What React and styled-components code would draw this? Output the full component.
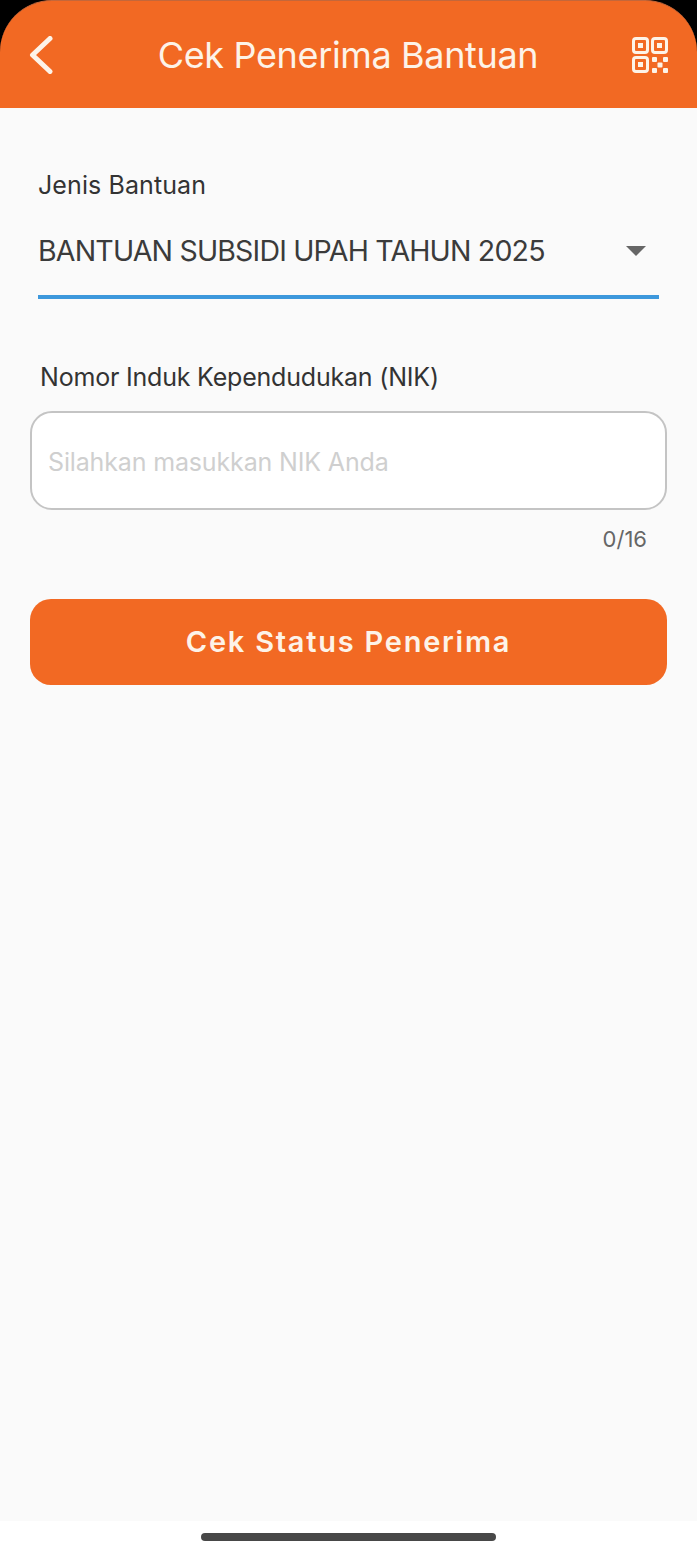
import React from 'react';
import styled, { createGlobalStyle } from 'styled-components';

const GlobalStyle = createGlobalStyle`
    html, body {
        margin: 0;
        padding: 0;
        background: #000;
    }
    * {
        box-sizing: border-box;
    }
`;

const Screen = styled.div`
    width: 697px;
    height: 1553px;
    display: flex;
    flex-direction: column;
    font-family: Inter, "Open Sans", sans-serif;
    overflow: hidden;
`;

const Header = styled.header`
    height: 108px;
    flex: none;
    display: flex;
    align-items: center;
    justify-content: space-between;
    padding: 0 29px 0 28px;
    background: #f26923;
    border-radius: 52px 52px 0 0;
    border-top: 1px solid #c4673a;
    color: #fdf3e8;
`;

const IconButton = styled.button`
    width: 36px;
    height: 38px;
    padding: 0;
    border: none;
    background: none;
    color: inherit;
    display: flex;
    align-items: center;
    svg {
        display: block;
    }
`;

const Title = styled.h1`
    margin: 0;
    font-size: 36px;
    font-weight: 400;
    letter-spacing: -0.35px;
    white-space: nowrap;
`;

const Content = styled.main`
    flex: 1;
    background: #fafafa;
    padding: 61px 30px 0 30px;
    display: flex;
    flex-direction: column;
`;

const SelectField = styled.div`
    margin: 0 8px;
    border-bottom: 4px solid #3d98dc;
    padding-bottom: 25px;
`;

const FieldLabel = styled.label`
    display: block;
    font-size: 25px;
    line-height: 32px;
    color: #333;
    letter-spacing: ${p => p.$spacing}px;
`;

const SelectRow = styled.div`
    margin-top: 29px;
    display: flex;
    align-items: center;
    justify-content: space-between;
    padding-right: 13px;
    height: 40px;
`;

const SelectValue = styled.span`
    font-size: 28.5px;
    color: #3b3b3b;
    letter-spacing: -0.82px;
    white-space: nowrap;
`;

const Caret = styled.span`
    width: 0;
    height: 0;
    margin-top: 2px;
    border-left: 10px solid transparent;
    border-right: 10px solid transparent;
    border-top: 10px solid #666;
`;

const NikField = styled.div`
    margin-top: 62px;
`;

const NikLabel = styled(FieldLabel)`
    padding-left: 10px;
`;

const InputBox = styled.div`
    margin-top: 18px;
    height: 99px;
    display: flex;
    align-items: center;
    padding: 3px 16px 0;
    background: #fff;
    border: 2px solid #c4c4c4;
    border-radius: 22px;
`;

const Placeholder = styled.span`
    font-size: 25px;
    color: #cfcfcf;
    letter-spacing: -0.15px;
`;

const Counter = styled.div`
    margin-top: 14px;
    padding-right: 20px;
    text-align: right;
    font-size: 22px;
    line-height: 30px;
    color: #666;
`;

const SubmitButton = styled.button`
    margin-top: 45px;
    height: 86px;
    width: 100%;
    padding: 0 0 2px;
    border: none;
    border-radius: 21px;
    background: #f26923;
    color: #fdf3e8;
    font-family: inherit;
    font-size: 29px;
    font-weight: 600;
    letter-spacing: 1.75px;
`;

const HomeArea = styled.div`
    height: 32px;
    flex: none;
    background: #fff;
    display: flex;
    justify-content: center;
    padding-top: 12px;
`;

const HomeBar = styled.div`
    width: 295px;
    height: 8px;
    border-radius: 4px;
    background: #484848;
`;

const BackIcon = () => (
    <svg width="28" height="38" viewBox="0 0 28 38" fill="none" stroke="currentColor" strokeWidth="5" strokeLinecap="round" strokeLinejoin="round">
        <path d="M22 2.5 L4.5 19 L22 35.5" />
    </svg>
);

const QrIcon = () => (
    <svg width="36" height="36" viewBox="0 0 36 36" fill="none" stroke="currentColor" strokeWidth="3">
        <rect x="1.5" y="1.5" width="14" height="14" rx="2.5" />
        <rect x="20.5" y="1.5" width="14" height="14" rx="2.5" />
        <rect x="1.5" y="20.5" width="14" height="14" rx="2.5" />
        <g fill="currentColor" stroke="none">
            <rect x="6" y="6" width="5" height="5" />
            <rect x="25" y="6" width="5" height="5" />
            <rect x="6" y="25" width="5" height="5" />
            <rect x="20" y="20" width="5" height="5" rx="1" />
            <rect x="31" y="20" width="5" height="5" rx="1" />
            <rect x="25.5" y="25.5" width="5" height="5" rx="1" />
            <rect x="20" y="31" width="5" height="5" rx="1" />
            <rect x="31" y="31" width="5" height="5" rx="1" />
        </g>
    </svg>
);

const App = () => {
    return (
        <Screen>
            <GlobalStyle />
            <Header>
                <IconButton>
                    <BackIcon />
                </IconButton>
                <Title>Cek Penerima Bantuan</Title>
                <IconButton>
                    <QrIcon />
                </IconButton>
            </Header>
            <Content>
                <SelectField>
                    <FieldLabel $spacing={0.1}>Jenis Bantuan</FieldLabel>
                    <SelectRow>
                        <SelectValue>BANTUAN SUBSIDI UPAH TAHUN 2025</SelectValue>
                        <Caret />
                    </SelectRow>
                </SelectField>
                <NikField>
                    <NikLabel $spacing={-0.2}>Nomor Induk Kependudukan (NIK)</NikLabel>
                    <InputBox>
                        <Placeholder>Silahkan masukkan NIK Anda</Placeholder>
                    </InputBox>
                    <Counter>0/16</Counter>
                </NikField>
                <SubmitButton>Cek Status Penerima</SubmitButton>
            </Content>
            <HomeArea>
                <HomeBar />
            </HomeArea>
        </Screen>
    );
};

export default App;
